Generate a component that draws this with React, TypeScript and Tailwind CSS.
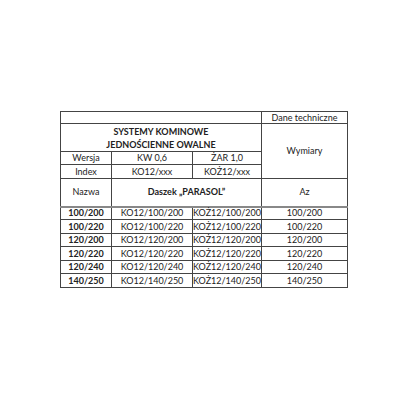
import React from "react";

const rows = [
  ["100/200", "KO12/100/200", "KOŻ12/100/200", "100/200"],
  ["100/220", "KO12/100/220", "KOŻ12/100/220", "100/220"],
  ["120/200", "KO12/120/200", "KOŻ12/120/200", "120/200"],
  ["120/220", "KO12/120/220", "KOŻ12/120/220", "120/220"],
  ["120/240", "KO12/120/240", "KOŻ12/120/240", "120/240"],
  ["140/250", "KO12/140/250", "KOŻ12/140/250", "140/250"],
];
const heights = ["h-[13px]", "h-[14px]", "h-[13px]", "h-[14px]", "h-[13px]", "h-[14px]"];

export default function App() {
  return (
    <div className="w-[400px] h-[400px] bg-white pt-[111px] pl-[60px] text-[#222]" style={{ fontFamily: "Lato, 'Open Sans', sans-serif" }}>
      <table className="border-collapse table-fixed text-[9px] leading-[10px] text-center">
        <colgroup>
          <col className="w-[51px]" />
          <col className="w-[81px]" />
          <col className="w-[69px]" />
          <col className="w-[86px]" />
        </colgroup>
        <tbody>
          <tr className="h-[12px]">
            <td colSpan={3} className="border border-[#444] p-0"></td>
            <td className="border border-[#444] p-0">Dane techniczne</td>
          </tr>
          <tr className="h-[28px]">
            <td colSpan={3} className="border border-[#444] p-0 font-bold leading-[13px]">
              SYSTEMY KOMINOWE
              <br />
              JEDNOŚCIENNE OWALNE
            </td>
            <td rowSpan={3} className="border border-[#444] p-0">Wymiary</td>
          </tr>
          <tr className="h-[13px]">
            <td className="border border-[#444] p-0">Wersja</td>
            <td className="border border-[#444] p-0">KW 0,6</td>
            <td className="border border-[#444] p-0">ŻAR 1,0</td>
          </tr>
          <tr className="h-[14px]">
            <td className="border border-[#444] p-0">Index</td>
            <td className="border border-[#444] p-0">KO12/xxx</td>
            <td className="border border-[#444] p-0">KOŻ12/xxx</td>
          </tr>
          <tr className="h-[28px]">
            <td className="border border-[#444] border-b-2 border-b-[#888] p-0">Nazwa</td>
            <td colSpan={2} className="border border-[#444] border-b-2 border-b-[#888] p-0 font-bold">Daszek „PARASOL”</td>
            <td className="border border-[#444] border-b-2 border-b-[#888] p-0">Az</td>
          </tr>
          {rows.map((r, i) => (
            <tr key={r[0]} className={heights[i]}>
              <td className="border border-[#444] p-0 font-bold">{r[0]}</td>
              <td className="border border-[#444] p-0">{r[1]}</td>
              <td className="border border-[#444] p-0">{r[2]}</td>
              <td className="border border-[#444] p-0">{r[3]}</td>
            </tr>
          ))}
        </tbody>
      </table>
    </div>
  );
}
